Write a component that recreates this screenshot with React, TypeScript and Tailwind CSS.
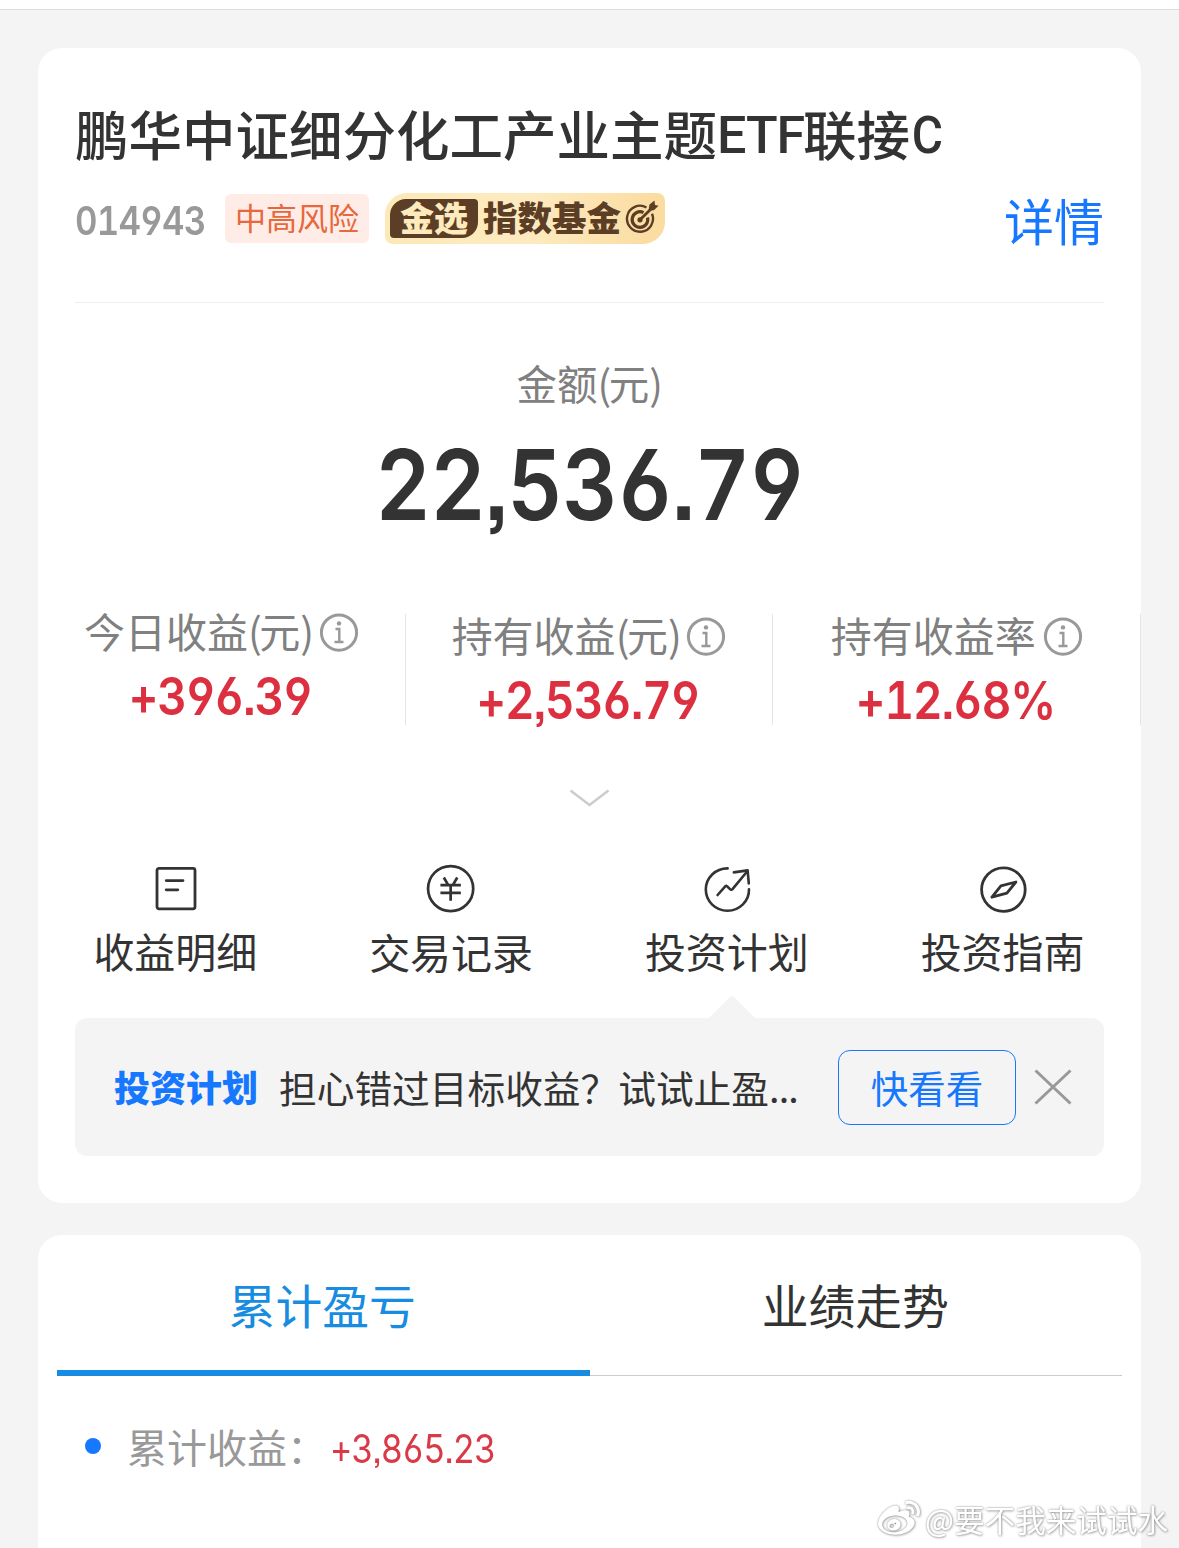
import React from 'react';
import clsx from 'clsx';
import { FaWeibo } from 'react-icons/fa';

const stats = [
  { label: '今日收益', unit: '元', value: '+396.39', raised: true },
  { label: '持有收益', unit: '元', value: '+2,536.79' },
  { label: '持有收益率', value: '+12.68%' },
];

const actions = [
  { label: '收益明细', icon: <DetailIcon /> },
  { label: '交易记录', icon: <YuanIcon />, lowered: true },
  { label: '投资计划', icon: <PlanIcon /> },
  { label: '投资指南', icon: <CompassIcon /> },
];

// tabular figures, open six and nine, square punctuation
const digits = "font-[Inter] [font-feature-settings:'tnum','cv03','cv04','ss07']";

function InfoIcon() {
  return (
    <svg className="w-[40px] h-[40px]" viewBox="0 0 40 40" fill="none" stroke="#999999">
      <circle cx="20" cy="19.6" r="17.6" strokeWidth="3" />
      <circle cx="20" cy="10.4" r="2.2" fill="#999999" stroke="none" />
      <path d="M16.5 16h3.8v13.2M15.5 29h9" strokeWidth="2.4" />
    </svg>
  );
}

function DetailIcon() {
  return (
    <svg className="w-[56px] h-[56px]" viewBox="0 0 56 56" fill="none" stroke="#333333" strokeWidth="2.8">
      <rect x="9" y="8.4" width="38" height="40.4" rx="2" />
      <path d="M18.2 20.6H35M18.2 29.8h11.6" strokeLinecap="round" />
    </svg>
  );
}

function YuanIcon() {
  return (
    <svg className="w-[56px] h-[56px]" viewBox="0 0 56 56" fill="none" stroke="#333333" strokeWidth="2.8">
      <circle cx="26.6" cy="29.4" r="23.2" />
      <path d="M19.6 18l4.4 7.5M33.4 18l-4.4 7.5M16.1 25.8h21M16.1 33.8h21M26.6 25.8v16" />
    </svg>
  );
}

function PlanIcon() {
  return (
    <svg
      className="w-[56px] h-[56px]"
      viewBox="0 0 56 56"
      fill="none"
      stroke="#333333"
      strokeWidth="2.6"
      strokeLinecap="round"
      strokeLinejoin="round"
    >
      <path d="M28.6 8.4A21.6 21.2 0 1 0 50 29.2" />
      <path d="M18.6 35l7.6-8.6c.6-.6 1.3-.6 2 0l2.8 2.8c.8.8 1.8.7 2.5-.1L48.5 11" />
      <path d="M34.8 12.4l13.8-2 1.2 13" />
    </svg>
  );
}

function CompassIcon() {
  return (
    <svg className="w-[56px] h-[56px]" viewBox="0 0 56 56" fill="none" stroke="#333333" strokeWidth="2.8">
      <circle cx="28.4" cy="29.6" r="21.8" />
      <path d="M16.9 37.2L25.9 25.8L40.9 22L31.9 33.2Z" strokeLinejoin="round" />
    </svg>
  );
}

function TargetIcon() {
  return (
    <svg className="w-[34px] h-[38px] ml-1 shrink-0" viewBox="0 0 34 38" fill="none" stroke="#5c3d26">
      <path d="M21.5 8.5A13 13 0 1 0 27 14.8" strokeWidth="2.4" />
      <path d="M18.5 13.6A7.8 7.8 0 1 0 22.5 18.5" strokeWidth="3.2" />
      <circle cx="15" cy="20.8" r="2.6" fill="#5c3d26" stroke="none" />
      <path d="M15 20.8L27 9" strokeWidth="2.8" />
      <path d="M23.5 11.5l1-6 5-4 .5 4.5 3.5.8-4.6 4.4z" fill="#5c3d26" stroke="none" />
    </svg>
  );
}

function Unit({ name }: { name: string }) {
  return (
    <>
      <span className="tracking-[-2.5px]">(</span>
      {name}
      <span className="tracking-[-2.5px]">)</span>
    </>
  );
}

function FundHeader() {
  return (
    <div className="px-[37px] pt-[52px]">
      <h1 className="flex items-center h-[66px] text-[53.5px] font-medium text-[#333333] whitespace-nowrap">
        鹏华中证细分化工产业主题
        <span className="font-[Roboto] text-[52px] w-[86px] tracking-[-1px] pt-[6px]">ETF</span>
        联接
        <span className="font-[Roboto] text-[52px] pt-[6px] pl-[2px] origin-left scale-x-92">C</span>
      </h1>
      <div className="flex items-center h-[58px] mt-[23px]">
        <span className={clsx(digits, 'w-[150px] font-semibold text-[40px] tracking-[-0.9px] text-[#999999] pt-[6px] origin-left scale-x-87')}>
          014943
        </span>
        <span className="flex items-center justify-center w-[144px] h-[49px] rounded-md bg-[#ffece7] text-[31px] text-[#e6683c] pb-[4px]">
          中高风险
        </span>
        <span className="flex items-center w-[280px] h-[51px] ml-4 pl-[5px] rounded-tl-[22px] rounded-tr-lg rounded-br-[22px] rounded-bl-lg bg-linear-to-r from-[#fce9b8] via-[#fdebc0] to-[#fbdb9f]">
          <span className="flex items-center justify-center w-[88px] h-[39px] rounded-tl-2xl rounded-tr rounded-br-2xl rounded-bl bg-[#5c3d26] text-[34px] font-black text-[#fdeabd] pb-[3px]">
            金选
          </span>
          <span className="ml-[5px] text-[34.5px] font-black text-[#5c3d26] pb-[3px]">指数基金</span>
          <TargetIcon />
        </span>
        <a className="ml-auto pt-px text-[50px] text-[#1677ff]">详情</a>
      </div>
      <div className="h-px mt-[55px] bg-[#eeeeee]" />
    </div>
  );
}

function Stat({ label, unit, value, raised }: { label: string; unit?: string; value: string; raised?: boolean }) {
  return (
    <div className="h-[111px] border-r border-[#e5e5e5]">
      <div className={clsx('flex flex-col items-center', raised ? '-mt-[4px]' : 'mt-0')}>
        <div className="flex items-center h-[45px] gap-[7px] text-[41px] text-[#808080] whitespace-nowrap">
          <span className="pb-[4px]">
            {label}
            {unit && <Unit name={unit} />}
          </span>
          <InfoIcon />
        </div>
        <div className={clsx(digits, 'flex items-center h-[60px] mt-[12px] pr-[3px] font-semibold text-[52px] tracking-[-1.1px] text-[#dc3040] scale-x-88')}>
          {value}
        </div>
      </div>
    </div>
  );
}

function PlanBanner() {
  return (
    <div className="relative flex items-center h-[138px] mx-[37px] mt-[39px] pl-[39px] rounded-xl bg-[#f4f4f4]">
      <svg className="absolute left-[633px] -top-[23px] w-[48px] h-[24px]" viewBox="0 0 48 24">
        <path d="M0 24L22 2q2-2 4 0l22 22z" fill="#f4f4f4" />
      </svg>
      <span className="w-[165px] pb-[2px] text-[36px] font-black text-[#1677ff]">投资计划</span>
      <span className="w-[559px] text-[37.7px] text-[#333333] whitespace-nowrap">
        担心错过目标收益？试试止盈<span className="tracking-[-0.8px]">...</span>
      </span>
      <button className="w-[178px] h-[75px] border border-[#1677ff] rounded-xl text-[37.5px] text-[#1677ff]">
        快看看
      </button>
      <svg className="w-[38px] h-[36px] ml-[18px]" viewBox="0 0 38 36" stroke="#999999" strokeWidth="3">
        <path d="M1.5 1.5l35 33M36.5 1.5l-35 33" />
      </svg>
    </div>
  );
}

function SummaryCard() {
  return (
    <section className="h-[1155px] rounded-3xl bg-white">
      <FundHeader />
      <div className="flex flex-col items-center mt-[52px]">
        <span className="flex items-center h-[56px] pr-[2px] text-[40.5px] text-[#808080]">
          金额
          <Unit name="元" />
        </span>
        <span className={clsx(digits, 'flex items-center h-[120px] mt-[14px] font-semibold text-[98px] tracking-[-1px] text-[#333333] scale-x-88')}>
          22,536.79
        </span>
      </div>
      <div className="grid grid-cols-3 mt-[69px]">
        {stats.map((stat) => (
          <Stat key={stat.label} {...stat} />
        ))}
      </div>
      <svg className="block w-[40px] h-[18px] mx-auto mt-[64px]" viewBox="0 0 40 18" fill="none" stroke="#cccccc" strokeWidth="2.5">
        <path d="M0.5 1.5l19 14.5 19-14.5" />
      </svg>
      <div className="grid grid-cols-4 mt-[53px]">
        {actions.map(({ label, icon, lowered }) => (
          <div key={label} className="flex flex-col items-center h-[119px] text-[41px] text-[#333333]">
            {icon}
            <span className={clsx('flex items-center h-[56px] pr-px', lowered ? 'mt-[10px]' : 'mt-[6px]')}>{label}</span>
          </div>
        ))}
      </div>
      <PlanBanner />
    </section>
  );
}

function ProfitCard() {
  return (
    <section className="mt-8 h-[340px] px-[19px] rounded-t-3xl bg-white">
      <div className="grid grid-cols-2 h-[141px] text-[46.8px] text-center">
        <div className="flex items-center justify-center pt-[3px] pr-[2px] border-b-6 border-[#178ce0] text-[#178ce0]">
          累计盈亏
        </div>
        <div className="flex items-center justify-center pb-[2px] pr-px border-b border-[#cccccc] text-[#333333]">
          业绩走势
        </div>
      </div>
      <div className="flex items-center h-[60px] mt-[40px] pl-[28px] text-[40px]">
        <span className="w-4 h-4 rounded-full bg-[#1677ff]" />
        <span className="w-[203px] ml-[26px] text-[#999999]">累计收益：</span>
        <span className={clsx(digits, 'pt-[6px] text-[40px] tracking-[-1.2px] text-[#d93a48] origin-left scale-x-86')}>+3,865.23</span>
      </div>
    </section>
  );
}

export default function App() {
  return (
    <div className="relative w-[1179px] h-[1548px] overflow-hidden bg-[#f4f4f4] font-['Noto_Sans_CJK_SC',sans-serif] leading-none">
      <div className="h-[10px] bg-white border-b border-[#dddddd]" />
      <main className="mx-[38px] pt-[38px]">
        <SummaryCard />
        <ProfitCard />
      </main>
      <div className="absolute left-[878px] top-[1497px] flex items-center h-[44px] text-[30.6px] text-white whitespace-nowrap [filter:drop-shadow(0_0_1px_rgba(0,0,0,0.4))_drop-shadow(1px_1px_1px_rgba(0,0,0,0.2))]">
        <FaWeibo className="w-[42px] h-[42px] mr-[5px]" />
        @要不我来试试水
      </div>
    </div>
  );
}
